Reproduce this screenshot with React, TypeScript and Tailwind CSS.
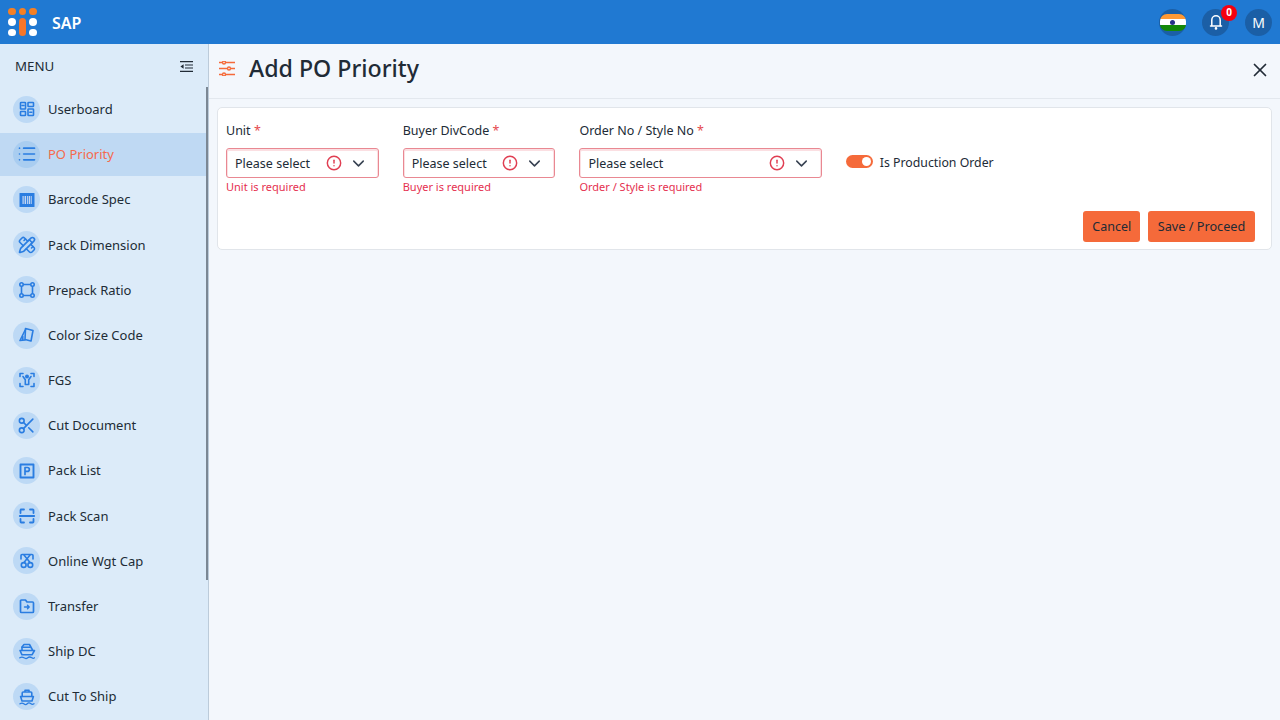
import React from "react";
import { X, ChevronDown, List, PencilRuler, Scissors, CircleAlert } from "lucide-react";

const svg = (c: React.ReactNode) => (
  <svg width="18" height="18" viewBox="0 0 18 18" fill="none" stroke="currentColor" strokeWidth="1.6" strokeLinecap="round" strokeLinejoin="round">{c}</svg>
);

const icons: Record<string, React.ReactNode> = {
  board: svg(<><rect x="2.5" y="2.5" width="5" height="6.5" rx="0.6" /><path d="M4 5.5h2" /><rect x="2.5" y="11.5" width="5" height="4" rx="0.6" /><rect x="10" y="2.5" width="5.5" height="4" rx="0.6" /><rect x="10" y="9" width="5.5" height="6.5" rx="0.6" /><path d="M11.8 12.2h2" /></>),
  list: <List size={20} strokeWidth={2} />,
  barcode: (
    <svg width="18" height="18" viewBox="0 0 18 18"><rect x="1.5" y="2" width="15" height="14" rx="0.5" fill="currentColor" /><path d="M4.5 5h1.2v8H4.5zM6.6 5h1.4v8H6.6zM8.9 5h1v8h-1zM10.7 5h1.4v8h-1.4zM12.8 5h.9v8h-.9z" fill="#c3d6f2" /></svg>
  ),
  ruler: <PencilRuler size={18} strokeWidth={2.1} />,
  ratio: svg(<><rect x="3.5" y="3.5" width="11" height="11" /><circle cx="3.5" cy="3.5" r="1.7" fill="#bdd9f5" /><circle cx="14.5" cy="3.5" r="1.7" fill="#bdd9f5" /><circle cx="3.5" cy="14.5" r="1.7" fill="#bdd9f5" /><circle cx="14.5" cy="14.5" r="1.7" fill="#bdd9f5" /></>),
  swatch: svg(<><path d="M7.5 2.5 15 4.5 13 15 7 13.5Z" /><path d="M7.2 4 2 14.5 7 14" /><path d="M4.8 10.5v3" /></>),
  fgs: svg(<><path d="M2 5.5V2.5h3M13 2.5h3v3M2 12.5v3h3M16 12.5v3h-3" /><path d="M5 5.5 7.3 8.8v4.7h3.4V8.8L13 5.5" /><circle cx="9" cy="5.6" r="1.2" fill="currentColor" /></>),
  scissors: <Scissors size={19} strokeWidth={2} />,
  packlist: svg(<><rect x="2.5" y="2.5" width="13" height="13" strokeWidth="1.9" /><path d="M7 12.5v-7h2.4a1.9 1.9 0 0 1 0 3.9H7" strokeWidth="1.7" /></>),
  scan: svg(<><path d="M2.5 6V3.2a.7.7 0 0 1 .7-.7H6M12 2.5h2.8a.7.7 0 0 1 .7.7V6M2.5 12v2.8a.7.7 0 0 0 .7.7H6M12 15.5h2.8a.7.7 0 0 0 .7-.7V12" strokeWidth="1.8" /><path d="M1.8 9h14.4" strokeWidth="1.8" /></>),
  online: svg(<><path d="M3 7V3.5a1 1 0 0 1 1-1h10a1 1 0 0 1 1 1V7" /><path d="M6 3 12 10.5M12 3 6 10.5" /><circle cx="5.7" cy="13" r="2.4" /><circle cx="12.3" cy="13" r="2.4" /></>),
  transfer: svg(<><path d="M2.5 4.2v10.3a1 1 0 0 0 1 1h11a1 1 0 0 0 1-1V6a1 1 0 0 0-1-1H9L7.5 3h-4a1 1 0 0 0-1 1.2Z" strokeWidth="1.7" /><path d="M6.5 10h4.5M9.5 8.3 11.2 10l-1.7 1.7" strokeWidth="1.4" /></>),
  shipdc: svg(<><path d="M4 8V5l2-2.5h5.5L14.5 8" /><path d="M4 5.3h8" /><path d="M2 8.5h14.5L14 12.8H4Z" /><path d="M1.8 15.8c1.5-1 2.7-1 4.2 0s2.5 1 3.7 0 2.7-1 4.2 0 1.7.6 2.5 0" strokeWidth="1.3" /></>),
  cutship: svg(<><path d="M4.2 8.5V5a1 1 0 0 1 1-1h7.6a1 1 0 0 1 1 1v3.5M7 4V2.3h4V4" /><path d="M2.6 8.5h12.8l-1.4 4.5H4Z" /><path d="M2 15.8c1.5-1 2.5-1 3.8 0s2.5 1 3.4 0 2.5-1 3.8 0 2 .6 3 0" strokeWidth="1.3" /></>),
};

const items: [string, string][] = [
  ["Userboard", "board"], ["PO Priority", "list"], ["Barcode Spec", "barcode"], ["Pack Dimension", "ruler"],
  ["Prepack Ratio", "ratio"], ["Color Size Code", "swatch"], ["FGS", "fgs"], ["Cut Document", "scissors"],
  ["Pack List", "packlist"], ["Pack Scan", "scan"], ["Online Wgt Cap", "online"], ["Transfer", "transfer"],
  ["Ship DC", "shipdc"], ["Cut To Ship", "cutship"],
];

function Field({ label, error, width }: { label: string; error: string; width: string }) {
  return (
    <div className={`flex flex-col ${width}`}>
      <div className="h-[22px] text-[12.5px] leading-[22px] text-[#212b36]">
        {label} <span className="text-[#e5484d]">*</span>
      </div>
      <div className="mt-[6.3px] flex h-[29.7px] items-center rounded-[3px] border border-[#e98892] bg-white pl-[8px] pr-[10px] shadow-[inset_0_1px_0_1px_#fbdfe2]">
        <span className="mt-[3px] flex-1 text-[12.5px] text-[#212b36]">Please select</span>
        <CircleAlert size={16} strokeWidth={2.2} className="mr-[7px] text-[#e03e52]" />
        <ChevronDown size={19} strokeWidth={1.9} className="text-[#374151]" />
      </div>
      <div className="mt-[1px] h-[16px] text-[11px] leading-[16px] text-[#e5304f]">{error}</div>
    </div>
  );
}

export default function App() {
  return (
    <div className="flex h-[720px] w-[1280px] flex-col overflow-hidden bg-[#f3f7fc] font-['Noto_Sans',sans-serif]">
      <header className="flex h-[44px] shrink-0 items-center bg-[#2079d2] pl-[8px] pr-[8px]">
        <div className="grid grid-cols-[7.5px_7.5px_7.5px] grid-rows-[7.5px_7.5px_7.5px] gap-[3px]">
          <span className="rounded-full bg-[#f58025]" />
          <span className="rounded-full bg-[#f58025]" />
          <span className="rounded-full bg-[#f58025]" />
          <span className="rounded-full bg-white" />
          <span className="row-span-2 rounded-full bg-[#f5762a]" />
          <span className="rounded-full bg-white" />
          <span className="rounded-full bg-white" />
          <span className="rounded-full bg-white" />
        </div>
        <span className="ml-[15.5px] mt-[1px] text-[16px] font-semibold text-white">SAP</span>
        <div className="ml-auto flex items-center gap-[16px]">
          <div className="flex h-[27px] w-[27px] items-center justify-center overflow-visible rounded-full bg-[#1b5fa6]">
            <div className="flex h-[17px] w-[26px] shrink-0 flex-col overflow-hidden rounded-[7px]">
              <div className="flex-1 bg-[#ff9933]" />
              <div className="flex flex-1 items-center justify-center bg-white"><span className="h-[5px] w-[5px] rounded-full bg-[#27308a]" /></div>
              <div className="flex-1 bg-[#138808]" />
            </div>
          </div>
          <div className="relative flex h-[27px] w-[27px] items-center justify-center rounded-full bg-[#1b5fa6] text-white">
            <svg width="14" height="16" viewBox="0 0 14 16" fill="none" stroke="currentColor" strokeWidth="1.5" strokeLinecap="round" strokeLinejoin="round">
              <path d="M2.8 11.5V6a4.2 4.2 0 0 1 8.4 0v5.5" />
              <path d="M1.5 12h11" />
              <circle cx="7" cy="14.4" r="0.6" fill="currentColor" />
            </svg>
            <span className="absolute -top-[4px] left-[19px] flex h-[16px] w-[16px] items-center justify-center rounded-full bg-[#f5000f] text-[10px] font-bold text-white">0</span>
          </div>
          <div className="flex h-[27px] w-[27px] items-center justify-center rounded-full bg-[#1b5fa6] text-[14px] text-white">M</div>
        </div>
      </header>
      <div className="flex min-h-0 flex-1">
        <aside className="relative flex w-[209px] shrink-0 flex-col overflow-hidden border-r border-[#bccbda] bg-[#dcebf9]">
          <div className="flex h-[42.7px] shrink-0 items-center justify-between pl-[15px] pr-[15px]">
            <span className="mt-[3px] text-[13.3px] text-[#212b36]">MENU</span>
            <svg width="13" height="13" viewBox="0 0 13 13" className="mt-[2px] text-[#212b36]" fill="currentColor">
              <path d="M0 1h13v1.2H0zM5 4.4h8v1.2H5zM5 7.4h8v1.2H5zM0 10.8h13V12H0zM3.6 4.2v4.6L.4 6.5z" />
            </svg>
          </div>
          <nav className="flex flex-col">
            {items.map(([label, icon]) => {
              const active = label === "PO Priority";
              return (
                <div key={label} className={`my-[1.4px] flex h-[42.4px] shrink-0 items-center pl-[13px] ${active ? "bg-[#bfd9f3]" : ""}`}>
                  <span className={`flex h-[27px] w-[27px] items-center justify-center rounded-full text-[#2a7de1] ${active ? "bg-[#a9cdf0]" : "bg-[#bdd9f5]"}`}>{icons[icon]}</span>
                  <span className={`ml-[8px] mt-[1.2px] text-[13px] ${active ? "text-[#f56a4d]" : "text-[#212b36]"}`}>{label}</span>
                </div>
              );
            })}
          </nav>
          <div className="absolute right-[-1px] top-[43px] h-[493px] w-[3px] bg-[#7b8794]" />
        </aside>
        <main className="flex min-w-0 flex-1 flex-col">
          <div className="flex h-[55px] shrink-0 items-center border-b border-[#e3e8ee] pl-[10px] pr-[9px]">
            <svg width="16" height="15" viewBox="0 0 16 15" className="mb-[6px] text-[#f56a3a]" fill="none" stroke="currentColor" strokeWidth="1.4">
              <path d="M0 1.5h3M7 1.5h9M0 7.5h8M12 7.5h4M0 13.5h3M7 13.5h9" />
              <circle cx="5" cy="1.5" r="1.5" /><circle cx="10" cy="7.5" r="1.5" /><circle cx="5" cy="13.5" r="1.5" />
            </svg>
            <h1 className="mb-[4px] ml-[14px] text-[23.2px] font-medium leading-none text-[#212b36]">Add PO Priority</h1>
            <X size={22} strokeWidth={1.9} className="ml-auto mt-[-2px] text-[#212b36]" />
          </div>
          <section className="mx-[8px] mt-[8px] h-[143px] rounded-[5px] border border-[#e1e5ea] bg-white px-[8px] pt-[12px]">
            <div className="flex gap-[24px]">
              <Field label="Unit" error="Unit is required" width="w-[152.7px]" />
              <Field label="Buyer DivCode" error="Buyer is required" width="w-[152.7px]" />
              <Field label="Order No / Style No" error="Order / Style is required" width="w-[242.4px]" />
              <div className="mt-[27px] flex h-[30px] items-center">
                <span className="relative mb-[2px] h-[13px] w-[27px] rounded-full bg-[#f56a3a]">
                  <span className="absolute right-[2px] top-[2px] h-[9px] w-[9px] rounded-full bg-white" />
                </span>
                <span className="ml-[7px] mt-[2px] text-[12.3px] text-[#212b36]">Is Production Order</span>
              </div>
            </div>
            <div className="mt-[16px] flex justify-end gap-[7.6px] pr-[8px]">
              <button className="h-[30.7px] w-[57.4px] rounded-[3px] bg-[#f56a3a] pt-[2px] text-[12.5px] text-[#212b36]">Cancel</button>
              <button className="h-[30.7px] w-[107px] rounded-[3px] bg-[#f56a3a] pt-[1px] text-[12.7px] text-[#212b36]">Save / Proceed</button>
            </div>
          </section>
        </main>
      </div>
    </div>
  );
}
